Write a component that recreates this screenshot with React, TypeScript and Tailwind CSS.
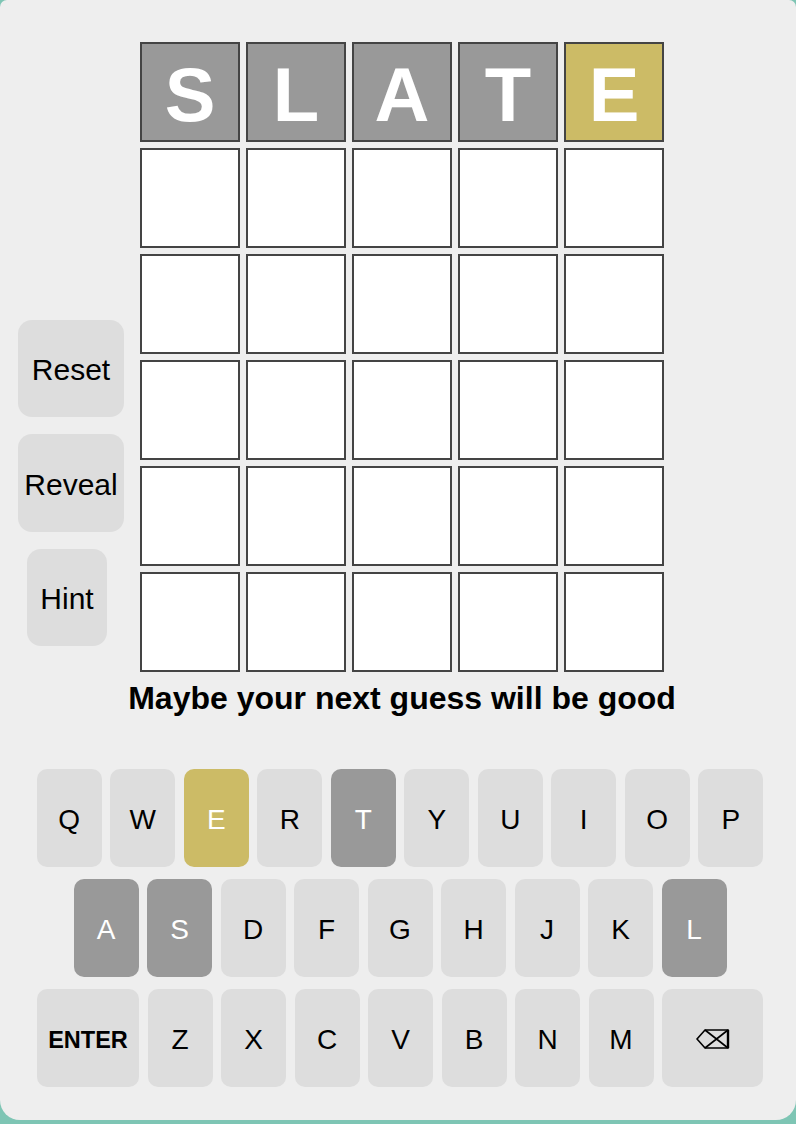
import React from "react";

type TileState = "empty" | "absent" | "present";

const FONT = { fontFamily: '"Liberation Sans", Arial, sans-serif' };

function Tile({ letter, state }: { letter?: string; state: TileState }) {
  const bg =
    state === "absent" ? "bg-[#999999]" : state === "present" ? "bg-[#ccbb66]" : "bg-white";
  return (
    <div
      className={`w-[100px] h-[100px] border-2 border-[#444444] ${bg} flex items-center justify-center text-white font-bold text-[76px] leading-none pt-[6px]`}
    >
      {letter}
    </div>
  );
}

function Key({
  label,
  kind,
  wide,
}: {
  label: React.ReactNode;
  kind: "light" | "absent" | "present";
  wide?: "enter" | "back";
}) {
  const bg =
    kind === "absent"
      ? "bg-[#999999] text-white"
      : kind === "present"
      ? "bg-[#ccbb66] text-white"
      : "bg-[#dddddd] text-black";
  const w = wide === "enter" ? "w-[102px]" : wide === "back" ? "w-[101px]" : "w-[65px]";
  return (
    <div
      className={`${w} h-[98px] rounded-[10px] ${bg} flex items-center justify-center ${
        wide === "enter" ? "text-[23.5px] font-bold pt-[6px]" : "text-[28px] pt-[4px]"
      } leading-none`}
    >
      {label}
    </div>
  );
}

function Backspace() {
  return (
    <svg width="34" height="22" viewBox="0 0 34 22" className="mt-[-2px]">
      <path
        d="M1 11 L9 2 H32 V20 H9 Z"
        fill="none"
        stroke="black"
        strokeWidth="1.6"
        strokeLinejoin="miter"
      />
      <path d="M32 2 V20" stroke="black" strokeWidth="2.4" />
      <path d="M9 2 L32 20 M32 2 L9 20" stroke="black" strokeWidth="1.6" />
    </svg>
  );
}

export default function App() {
  const word = ["S", "L", "A", "T", "E"];
  const states: TileState[] = ["absent", "absent", "absent", "absent", "present"];
  const absent = new Set(["S", "L", "A", "T"]);
  const present = new Set(["E"]);
  const kindOf = (k: string) =>
    absent.has(k) ? "absent" : present.has(k) ? "present" : "light";

  const row1 = "QWERTYUIOP".split("");
  const row2 = "ASDFGHJKL".split("");
  const row3 = "ZXCVBNM".split("");

  return (
    <div className="min-h-[1124px] bg-[#7ec5b4]" style={FONT}>
      <div className="h-[1120px] bg-[#eeeeee] rounded-t-[7px] rounded-b-[20px] pt-[42px]">
        <div className="flex">
          <div className="w-[124px] pl-[18px] pt-[278px] flex flex-col items-start gap-[17px]">
            <div className="w-[106px] h-[97px] rounded-[14px] bg-[#dddddd] flex items-center justify-center text-[30px] text-black pt-[2px]">
              Reset
            </div>
            <div className="w-[106px] h-[98px] rounded-[14px] bg-[#dddddd] flex items-center justify-center text-[30px] text-black pt-[2px]">
              Reveal
            </div>
            <div className="ml-[9px] w-[80px] h-[97px] rounded-[14px] bg-[#dddddd] flex items-center justify-center text-[30px] text-black pt-[2px]">
              Hint
            </div>
          </div>
          <div className="ml-[16px] flex flex-col w-[524px]">
            <div className="flex flex-col gap-[6px]">
              {Array.from({ length: 6 }).map((_, r) => (
                <div key={r} className="flex gap-[6px]">
                  {Array.from({ length: 5 }).map((_, c) => (
                    <Tile
                      key={c}
                      letter={r === 0 ? word[c] : undefined}
                      state={r === 0 ? states[c] : "empty"}
                    />
                  ))}
                </div>
              ))}
            </div>
            <div className="mt-[10px] flex justify-center">
              <div className="whitespace-nowrap text-[32px] leading-[32px] font-bold text-black">
                Maybe your next guess will be good
              </div>
            </div>
          </div>
        </div>

        <div className="mt-[55px] pl-[4px] flex flex-col items-center gap-[12px]">
          <div className="flex gap-[8.5px]">
            {row1.map((k) => (
              <Key key={k} label={k} kind={kindOf(k)} />
            ))}
          </div>
          <div className="flex gap-[8.5px]">
            {row2.map((k) => (
              <Key key={k} label={k} kind={kindOf(k)} />
            ))}
          </div>
          <div className="flex gap-[8.5px]">
            <Key label="ENTER" kind="light" wide="enter" />
            {row3.map((k) => (
              <Key key={k} label={k} kind={kindOf(k)} />
            ))}
            <Key label={<Backspace />} kind="light" wide="back" />
          </div>
        </div>
      </div>
    </div>
  );
}
